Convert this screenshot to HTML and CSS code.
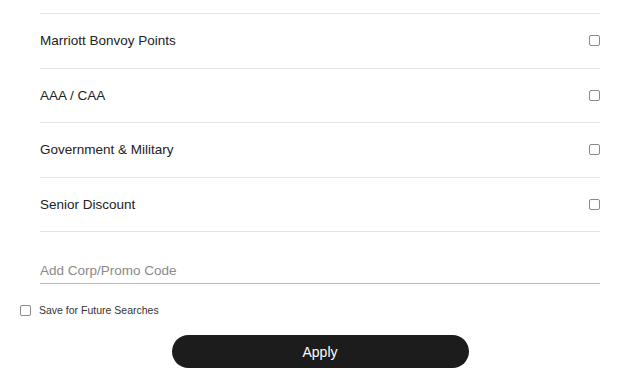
FILE: index.html
```html
<!DOCTYPE html>
<html>
<head>
<meta charset="utf-8">
<link rel="stylesheet" href="styles.css">
</head>
<body>
<div class="panel">
  <ul class="rates">
    <li class="rate"><span class="label">Marriott Bonvoy Points</span><span class="box"></span></li>
    <li class="rate"><span class="label">AAA / CAA</span><span class="box"></span></li>
    <li class="rate"><span class="label">Government &amp; Military</span><span class="box"></span></li>
    <li class="rate"><span class="label">Senior Discount</span><span class="box"></span></li>
  </ul>
  <div class="promo"><span class="placeholder">Add Corp/Promo Code</span></div>
  <div class="save"><span class="box small"></span><span class="save-label">Save for Future Searches</span></div>
  <div class="actions"><button class="apply">Apply</button></div>
</div>
</body>
</html>
```
FILE: styles.css
```css
* { box-sizing: border-box; }
html, body { margin: 0; padding: 0; background: #fff; }
body { font-family: "Liberation Sans", Arial, sans-serif; color: #1c1c1c; width: 640px; height: 375px; overflow: hidden; }
.panel { padding-top: 13px; }
.rates { list-style: none; margin: 0 40px; padding: 0; border-top: 1px solid #e3e3e3; }
.rate { height: 54.5px; border-bottom: 1px solid #e3e3e3; display: flex; align-items: center; justify-content: space-between; }
.label { font-size: 13.5px; color: #222; }
.box { width: 11px; height: 11px; border: 1px solid #8a8a8a; border-radius: 2px; background: #fff; flex: none; }
.promo { margin: 25px 40px 0; height: 27px; border-bottom: 1px solid #bcbcbc; display: flex; align-items: center; }
.placeholder { font-size: 13.5px; color: #8a8a8a; }
.save { display: flex; align-items: center; margin: 20px 0 0 20px; height: 12px; }
.save-label { font-size: 10.5px; color: #333; margin-left: 8px; }
.actions { display: flex; justify-content: center; margin-top: 19px; }
.apply { width: 297px; height: 33px; border: none; border-radius: 17px; background: #1c1c1c; color: #fff; font-family: "Liberation Sans", Arial, sans-serif; font-size: 14px; padding: 0; }
```
